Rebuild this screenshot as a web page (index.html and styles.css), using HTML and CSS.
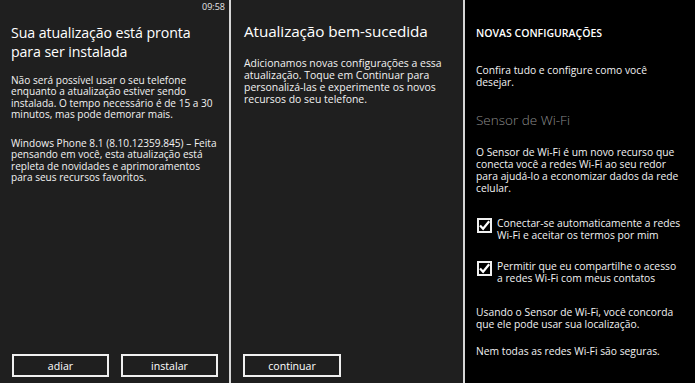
FILE: index.html
```html
<!DOCTYPE html>
<html lang="pt">
<head>
<meta charset="utf-8">
<title>Atualização</title>
<link rel="stylesheet" href="styles.css">
</head>
<body>
<div class="screens">
  <section class="panel panel-one">
    <div class="status">09:58</div>
    <h1 class="title">Sua atualização está pronta<br>para ser instalada</h1>
    <p class="text first">Não será possível usar o seu telefone<br>enquanto a atualização estiver sendo<br>instalada. O tempo necessário é de 15 a 30<br>minutos, mas pode demorar mais.</p>
    <p class="text second">Windows Phone 8.1 (8.10.12359.845) – Feita<br>pensando em você, esta atualização está<br>repleta de novidades e aprimoramentos<br>para seus recursos favoritos.</p>
    <div class="buttons">
      <button class="btn">adiar</button>
      <button class="btn">instalar</button>
    </div>
  </section>
  <div class="sep"></div>
  <section class="panel panel-two">
    <h1 class="title single">Atualização bem-sucedida</h1>
    <p class="text intro">Adicionamos novas configurações a essa<br>atualização. Toque em Continuar para<br>personalizá-las e experimente os novos<br>recursos do seu telefone.</p>
    <div class="buttons">
      <button class="btn">continuar</button>
    </div>
  </section>
  <div class="sep"></div>
  <section class="panel panel-three">
    <h2 class="caps">NOVAS CONFIGURAÇÕES</h2>
    <p class="text3 lead">Confira tudo e configure como você<br>desejar.</p>
    <h3 class="subtitle">Sensor de Wi-Fi</h3>
    <p class="text3 desc">O Sensor de Wi-Fi é um novo recurso que<br>conecta você a redes Wi-Fi ao seu redor<br>para ajudá-lo a economizar dados da rede<br>celular.</p>
    <div class="check c1">
      <span class="box"><svg viewBox="0 0 15 15" width="15" height="15"><path d="M3 7.4 L6.1 10.8 L12.2 3.2" fill="none" stroke="#fff" stroke-width="2.2"/></svg></span>
      <span class="label">Conectar-se automaticamente a redes<br>Wi-Fi e aceitar os termos por mim</span>
    </div>
    <div class="check c2">
      <span class="box"><svg viewBox="0 0 15 15" width="15" height="15"><path d="M3 7.4 L6.1 10.8 L12.2 3.2" fill="none" stroke="#fff" stroke-width="2.2"/></svg></span>
      <span class="label">Permitir que eu compartilhe o acesso<br>a redes Wi-Fi com meus contatos</span>
    </div>
    <p class="text3 using">Usando o Sensor de Wi-Fi, você concorda<br>que ele pode usar sua localização.</p>
    <p class="text3 notall">Nem todas as redes Wi-Fi são seguras.</p>
  </section>
</div>
</body>
</html>
```

FILE: styles.css
```css
* { box-sizing: border-box; }
html, body { margin: 0; padding: 0; }
body {
  width: 695px;
  height: 383px;
  overflow: hidden;
  background: #000;
  font-family: "Open Sans", "Noto Sans", sans-serif;
  color: #f2f2f2;
}
.screens {
  display: flex;
  height: 383px;
}
.sep {
  width: 2px;
  background: #d6d6d6;
  flex: none;
}
.panel {
  display: flex;
  flex-direction: column;
  height: 383px;
  flex: none;
}
.panel-one {
  width: 229px;
  background: #1f1f1f;
  padding: 0 11px;
}
.panel-two {
  width: 232px;
  background: #1f1f1f;
  padding: 0 12px 0 13px;
}
.panel-three {
  width: 230px;
  background: #000;
  padding: 0 11px;
}
.status {
  font-size: 9px;
  line-height: 14px;
  height: 14px;
  text-align: right;
  margin-right: -7px;
  color: #e6e6e6;
}
.title {
  margin: 9px 0 0;
  font-size: 14.2px;
  font-weight: 400;
  line-height: 19px;
  letter-spacing: -0.1px;
  color: #fff;
}
.title.single {
  margin-top: 22px;
  font-size: 15.3px;
}
.text {
  margin: 0;
  font-size: 10.1px;
  line-height: 11.3px;
}
.text.first { margin-top: 14px; }
.text.second { margin-top: 18px; }
.text.intro {
  margin-top: 16px;
  font-size: 10.45px;
  line-height: 12px;
}
.buttons {
  margin-top: auto;
  margin-bottom: 6px;
  display: grid;
  grid-template-columns: 97px 97px;
  gap: 12px;
  padding-left: 1px;
}
.panel-two .buttons {
  padding-left: 0;
  margin-left: -1px;
  grid-template-columns: 98px;
}
.btn {
  height: 23px;
  border: 2px solid #f0f0f0;
  background: transparent;
  color: #fff;
  font-family: inherit;
  font-size: 10.6px;
  padding: 0;
  line-height: 18px;
}
.caps {
  margin: 26px 0 0;
  font-size: 10.5px;
  font-weight: 600;
  line-height: 14px;
  color: #fff;
}
.text3 {
  margin: 0;
  font-size: 10.3px;
  line-height: 12px;
}
.lead { margin-top: 24px; }
.subtitle {
  margin: 24px 0 0;
  font-size: 13.5px;
  font-weight: 300;
  line-height: 16px;
  color: #8c8c8c;
}
.desc { margin-top: 18px; }
.check {
  display: flex;
  gap: 5px;
  align-items: flex-start;
  padding-left: 1px;
}
.c1 { margin-top: 23px; }
.c2 { margin-top: 19px; }
.box {
  width: 15px;
  height: 15px;
  border: 2px solid #f0f0f0;
  flex: none;
  position: relative;
  margin-top: 1px;
}
.box svg {
  position: absolute;
  left: -2px;
  top: -2px;
}
.label {
  font-size: 10.3px;
  line-height: 12px;
}
.using { margin-top: 22px; }
.notall { margin-top: 15px; }
```
